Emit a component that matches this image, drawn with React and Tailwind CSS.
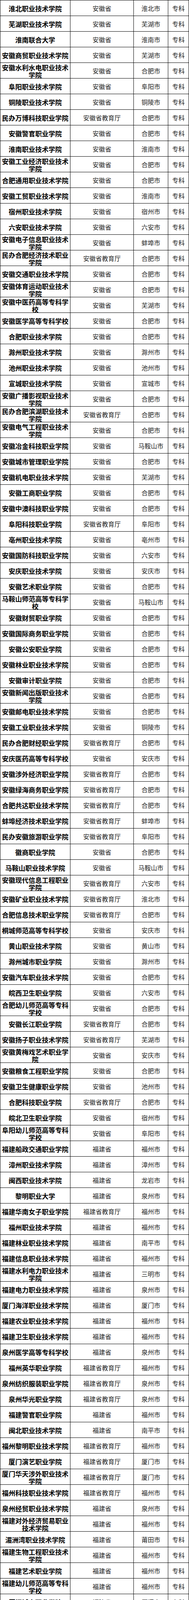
import React from "react";

// name | authority | city  (level is always 专科)
const raw = `淮北职业技术学院|安徽省|淮北市
芜湖职业技术学院|安徽省|芜湖市
淮南联合大学|安徽省|淮南市
安徽商贸职业技术学院|安徽省|芜湖市
安徽水利水电职业技术学院|安徽省|合肥市
阜阳职业技术学院|安徽省|阜阳市
铜陵职业技术学院|安徽省|铜陵市
民办万博科技职业学院|安徽省教育厅|合肥市
安徽警官职业学院|安徽省|合肥市
淮南职业技术学院|安徽省|淮南市
安徽工业经济职业技术学院|安徽省|合肥市
合肥通用职业技术学院|安徽省|合肥市
安徽工贸职业技术学院|安徽省|淮南市
宿州职业技术学院|安徽省|宿州市
六安职业技术学院|安徽省|六安市
安徽电子信息职业技术学院|安徽省|蚌埠市
民办合肥经济技术职业学院|安徽省教育厅|合肥市
安徽交通职业技术学院|安徽省|合肥市
安徽体育运动职业技术学院|安徽省|合肥市
安徽中医药高等专科学校|安徽省|芜湖市
安徽医学高等专科学校|安徽省|合肥市
合肥职业技术学院|安徽省|合肥市
滁州职业技术学院|安徽省|滁州市
池州职业技术学院|安徽省|池州市
宣城职业技术学院|安徽省|宣城市
安徽广播影视职业技术学院|安徽省|合肥市
民办合肥滨湖职业技术学院|安徽省教育厅|合肥市
安徽电气工程职业技术学院|安徽省|合肥市
安徽冶金科技职业学院|安徽省|马鞍山市
安徽城市管理职业学院|安徽省|合肥市
安徽机电职业技术学院|安徽省|芜湖市
安徽工商职业学院|安徽省|合肥市
安徽中澳科技职业学院|安徽省|合肥市
阜阳科技职业学院|安徽省教育厅|阜阳市
亳州职业技术学院|安徽省|亳州市
安徽国防科技职业学院|安徽省|六安市
安庆职业技术学院|安徽省|安庆市
安徽艺术职业学院|安徽省|合肥市
马鞍山师范高等专科学校|安徽省|马鞍山市
安徽财贸职业学院|安徽省|合肥市
安徽国际商务职业学院|安徽省|合肥市
安徽公安职业学院|安徽省|合肥市
安徽林业职业技术学院|安徽省|合肥市
安徽审计职业学院|安徽省|合肥市
安徽新闻出版职业技术学院|安徽省|合肥市
安徽邮电职业技术学院|安徽省|合肥市
安徽工业职业技术学院|安徽省|铜陵市
民办合肥财经职业学院|安徽省教育厅|合肥市
安庆医药高等专科学校|安徽省|安庆市
安徽涉外经济职业学院|安徽省教育厅|合肥市
安徽绿海商务职业学院|安徽省教育厅|合肥市
合肥共达职业技术学院|安徽省教育厅|合肥市
蚌埠经济技术职业学院|安徽省教育厅|蚌埠市
民办安徽旅游职业学院|安徽省教育厅|阜阳市
徽商职业学院|安徽省|合肥市
马鞍山职业技术学院|安徽省|马鞍山市
安徽现代信息工程职业学院|安徽省教育厅|六安市
安徽矿业职业技术学院|安徽省教育厅|淮北市
合肥信息技术职业学院|安徽省教育厅|合肥市
桐城师范高等专科学校|安徽省|安庆市
黄山职业技术学院|安徽省|黄山市
滁州城市职业学院|安徽省|滁州市
安徽汽车职业技术学院|安徽省|合肥市
皖西卫生职业学院|安徽省|六安市
合肥幼儿师范高等专科学校|安徽省|合肥市
安徽长江职业学院|安徽省教育厅|合肥市
安徽扬子职业技术学院|安徽省教育厅|芜湖市
安徽黄梅戏艺术职业学院|安徽省|安庆市
安徽粮食工程职业学院|安徽省|合肥市
安徽卫生健康职业学院|安徽省|池州市
合肥科技职业学院|安徽省教育厅|合肥市
皖北卫生职业学院|安徽省|宿州市
阜阳幼儿师范高等专科学校|安徽省|阜阳市
福建船政交通职业学院|福建省|福州市
漳州职业技术学院|福建省|漳州市
闽西职业技术学院|福建省|龙岩市
黎明职业大学|福建省|泉州市
福建华南女子职业学院|福建省教育厅|福州市
福州职业技术学院|福建省|福州市
福建林业职业技术学院|福建省|南平市
福建信息职业技术学院|福建省|福州市
福建水利电力职业技术学院|福建省|三明市
福建电力职业技术学院|福建省|泉州市
厦门海洋职业技术学院|福建省|厦门市
福建农业职业技术学院|福建省|福州市
福建卫生职业技术学院|福建省|福州市
泉州医学高等专科学校|福建省|泉州市
福州英华职业学院|福建省教育厅|福州市
泉州纺织服装职业学院|福建省教育厅|泉州市
泉州华光职业学院|福建省教育厅|泉州市
福建警官职业学院|福建省|福州市
闽北职业技术学院|福建省|南平市
福州黎明职业技术学院|福建省教育厅|福州市
厦门演艺职业学院|福建省教育厅|厦门市
厦门华天涉外职业技术学院|福建省教育厅|厦门市
福州科技职业技术学院|福建省教育厅|福州市
泉州经贸职业技术学院|福建省|泉州市
福建对外经济贸易职业技术学院|福建省|福州市
湄洲湾职业技术学院|福建省|莆田市
福建生物工程职业技术学院|福建省|福州市
福建艺术职业学院|福建省|福州市
福建幼儿师范高等专科学校|福建省|福州市
厦门城市职业学院|福建省|厦门市
泉州工艺美术职业学院|福建省|泉州市
三明医学科技职业学院|福建省|三明市
宁德职业技术学院|福建省|宁德市
福州软件职业技术学院|福建省教育厅|福州市
厦门兴才职业技术学院|福建省教育厅|厦门市
厦门软件职业技术学院|福建省教育厅|厦门市
福建体育职业技术学院|福建省|福州市
漳州城市职业学院|福建省|漳州市
厦门南洋职业学院|福建省教育厅|厦门市
厦门东海职业技术学院|福建省教育厅|厦门市
漳州科技职业学院|福建省教育厅|漳州市
漳州理工职业学院|福建省教育厅|漳州市
武夷山职业学院|福建省教育厅|南平市
漳州卫生职业学院|福建省|漳州市
泉州海洋职业学院|福建省教育厅|泉州市
泉州轻工职业学院|福建省教育厅|泉州市
厦门安防科技职业学院|福建省教育厅|厦门市
泉州幼儿师范高等专科学校|福建省|泉州市
闽江师范高等专科学校|福建省|福州市
泉州工程职业技术学院|福建省教育厅|泉州市
福州墨尔本理工职业学院|福建省教育厅|福州市
上饶幼儿师范高等专科学校|江西省|上饶市
抚州幼儿师范高等专科学校|江西省|抚州市
江西工业职业技术学院|江西省|南昌市
江西医学高等专科学校|江西省|上饶市
九江职业大学|江西省|九江市
九江职业技术学院|江西省|九江市
江西司法警官职业学院|江西省|南昌市
江西陶瓷工艺美术职业技术学院|江西省|景德镇市
江西旅游商贸职业学院|江西省|南昌市
江西电力职业技术学院|江西省|南昌市
江西环境工程职业学院|江西省|赣州市
江西艺术职业学院|江西省|南昌市
鹰潭职业技术学院|江西省|鹰潭市
江西信息应用职业技术学院|江西省|南昌市
江西交通职业技术学院|江西省|南昌市
江西财经职业学院|江西省|九江市
江西应用技术职业学院|江西省|赣州市
江西现代职业技术学院|江西省|南昌市
江西工业工程职业技术学院|江西省|萍乡市
江西机电职业技术学院|江西省|南昌市
江西科技职业学院|江西省教育厅|南昌市
江西外语外贸职业学院|江西省|南昌市
江西工业贸易职业技术学院|江西省|南昌市
宜春职业技术学院|江西省|宜春市
江西应用工程职业学院|江西省|萍乡市
江西生物科技职业学院|江西省|南昌市
江西建设职业技术学院|江西省|南昌市
抚州职业技术学院|江西省|抚州市
江西中医药高等专科学校|江西省|抚州市
江西经济管理职业学院|江西省|南昌市
江西制造职业技术学院|江西省|南昌市
江西工程职业学院|江西省|南昌市
江西青年职业学院|江西省|南昌市
上饶职业技术学院|江西省|上饶市
江西航空职业技术学院|江西省|南昌市
江西农业工程职业学院|江西省|宜春市
赣西科技职业学院|江西省教育厅|新余市
江西卫生职业学院|江西省|南昌市
江西新能源科技职业学院|江西省教育厅|新余市
江西枫林涉外经贸职业学院|江西省教育厅|九江市
江西泰豪动漫职业学院|江西省教育厅|南昌市
江西冶金职业技术学院|江西省|新余市
江西管理职业学院|江西省|南昌市
江西传媒职业学院|江西省|南昌市
江西工商职业技术学院|江西省教育厅|南昌市
景德镇陶瓷职业技术学院|江西省教育厅|景德镇市
共青科技职业学院|江西省教育厅|九江市
赣州师范高等专科学校|江西省|赣州市
江西水利职业学院|江西省|南昌市
宜春幼儿师范高等专科学校|江西省|宜春市
吉安职业技术学院|江西省|吉安市
江西洪州职业学院|江西省教育厅|宜春市
江西师范高等专科学校|江西省|鹰潭市
南昌影视传播职业学院|江西省教育厅|南昌市
赣南卫生健康职业学院|江西省|赣州市
萍乡卫生职业学院|江西省|萍乡市
江西婺源茶业职业学院|江西省|上饶市
赣州职业技术学院|江西省|赣州市
山东医学高等专科学校|山东省|临沂市
菏泽医学专科学校|山东省|菏泽市
山东商业职业技术学院|山东省|济南市
山东电力高等专科学校|山东省|济南市
日照职业技术学院|山东省|日照市
曲阜远东职业技术学院|山东省教育厅|济宁市`;

const schools = raw.split("\n").map((line) => {
    const [name, authority, city] = line.split("|");
    return { name, authority, city };
});

const font = {
    fontFamily: '"Noto Sans CJK SC", "Noto Sans", sans-serif',
};

export default function App() {
    return (
        <div className="w-[483px] bg-white text-black" style={font}>
            <div className="border-l border-t border-black">
                {schools.map((s, i) => (
                    <div
                        key={i}
                        className="grid h-[40px] grid-cols-[179px_162px_88px_53px] border-b border-black"
                    >
                        <div className="flex items-center justify-center border-r border-black px-[3px] pt-[2px] text-center text-[17px] font-bold leading-[19px]">
                            {s.name}
                        </div>
                        <div className="flex items-center justify-center border-r border-black text-[16px] leading-[24px] text-[#222]">
                            {s.authority}
                        </div>
                        <div className="flex items-center justify-center border-r border-black text-[16px] leading-[24px] text-[#222]">
                            {s.city}
                        </div>
                        <div className="flex items-center justify-center border-r border-black text-[16px] leading-[24px] text-[#222]">
                            专科
                        </div>
                    </div>
                ))}
            </div>
        </div>
    );
}
